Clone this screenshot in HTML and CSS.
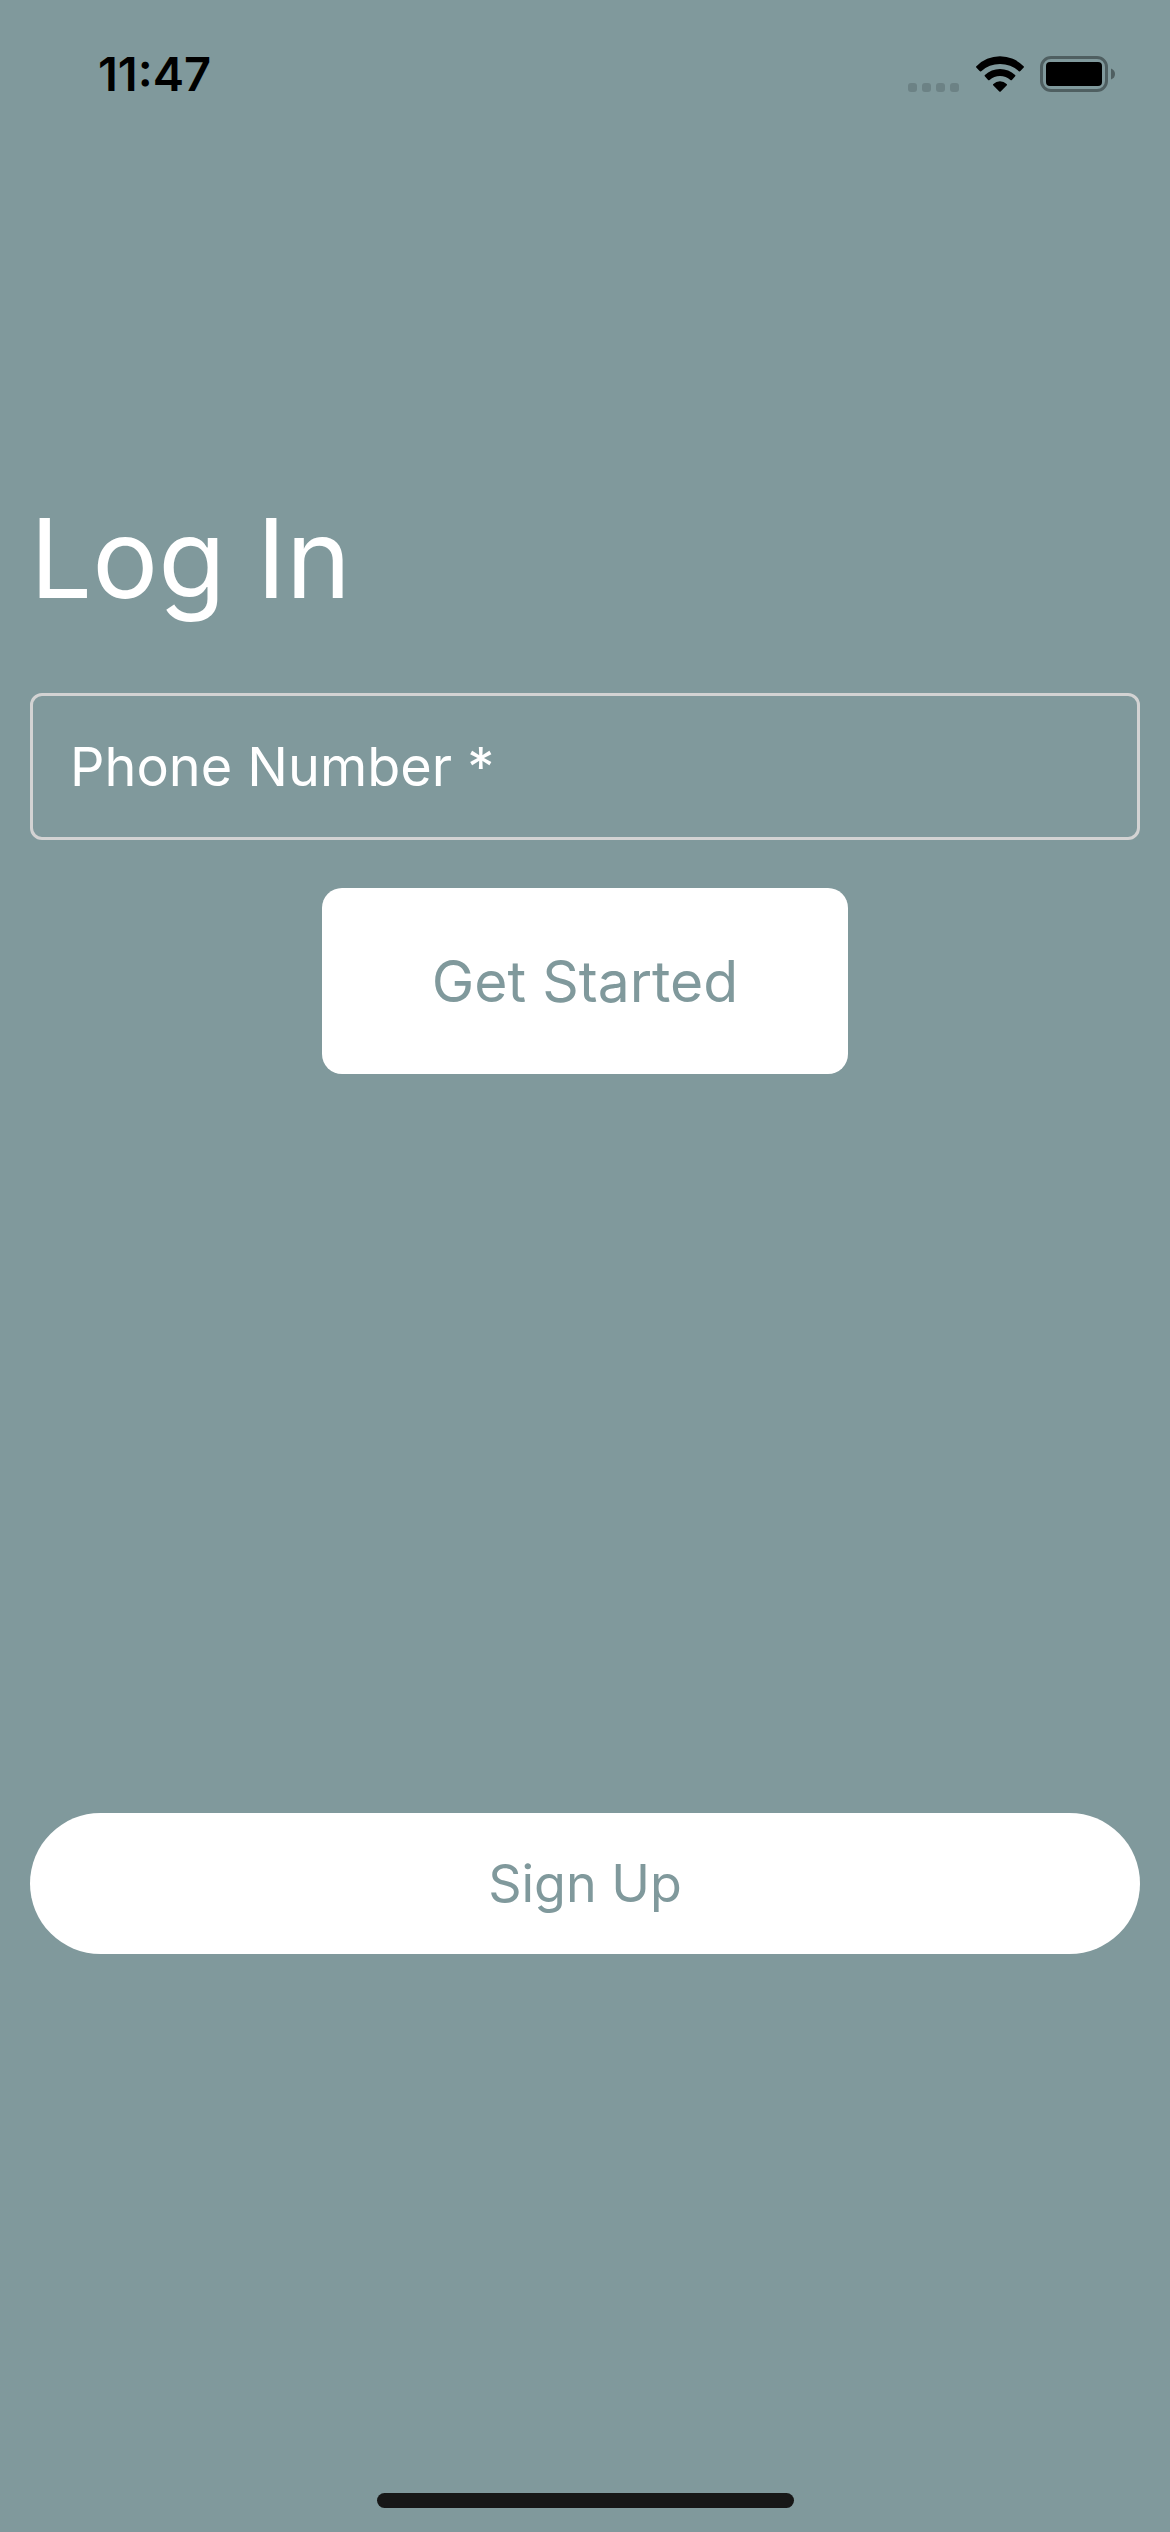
FILE: index.html
```html
<!DOCTYPE html>
<html lang="en">
<head>
  <meta charset="utf-8">
  <meta name="viewport" content="width=device-width, initial-scale=1">
  <title>Log In</title>
  <link rel="stylesheet" href="styles.css">
</head>
<body>
  <div class="screen">
    <header class="status-bar">
      <time class="clock">11:47</time>
      <div class="indicators">
        <svg class="signal" width="52" height="36" viewBox="0 0 52 36" aria-hidden="true">
          <rect x="0" y="27" width="9" height="9" rx="3"/>
          <rect x="14" y="27" width="9" height="9" rx="3"/>
          <rect x="28" y="27" width="9" height="9" rx="3"/>
          <rect x="42" y="27" width="9" height="9" rx="3"/>
        </svg>
        <svg width="48" height="36" viewBox="0 0 48 36" aria-hidden="true">
          <path d="M.4 10.2A33 33 0 0 1 47.6 10.2Q48.3 10.8 47.7 11.5L44.4 15.1Q43.6 15.9 42.8 15.2A27.8 27.8 0 0 0 5.2 15.2Q4.4 15.9 3.6 15.1L.3 11.5Q-.3 10.8 .4 10.2Z"/>
          <path d="M8.9 19A21.7 21.7 0 0 1 39.1 19Q39.8 19.6 39.2 20.3L35.9 23.9Q35.2 24.6 34.4 23.9A15.7 15.7 0 0 0 13.6 23.9Q12.8 24.6 12.1 23.9L8.8 20.3Q8.2 19.6 8.9 19Z"/>
          <path d="M17.4 27.9A9.6 9.6 0 0 1 30.6 27.9Q31.4 28.6 30.6 29.4L24.7 35.5Q24 36.2 23.3 35.5L17.4 29.4Q16.6 28.6 17.4 27.9Z"/>
        </svg>
        <svg width="76" height="36" viewBox="0 0 76 36" aria-hidden="true">
          <rect class="battery-shell" x="1.5" y="1.5" width="65" height="33" rx="9.5"/>
          <rect x="6" y="6" width="56" height="24" rx="4"/>
          <path class="battery-cap" d="M71 12.5Q75 14 75 18T71 23.5Z"/>
        </svg>
      </div>
    </header>

    <main class="content">
      <form class="login">
        <h1 class="title">Log In</h1>
        <input class="field" type="tel" name="phone" placeholder="Phone Number *" aria-label="Phone Number" required>
        <button class="button start" type="submit">Get Started</button>
      </form>
      <button class="button sign-up" type="button">Sign Up</button>
    </main>

    <footer class="home-area">
      <div class="home-bar"></div>
    </footer>
  </div>
</body>
</html>
```
FILE: styles.css
```css
:root {
  --teal: #80999c;
  --line: #d3d3d3;
}

* {
  box-sizing: border-box;
}

body {
  margin: 0;
  background: var(--teal);
  color: #fff;
  font-family: Inter, "Liberation Sans", sans-serif;
}

.screen {
  display: flex;
  flex-direction: column;
  min-height: 100vh;
}

.status-bar {
  display: flex;
  justify-content: space-between;
  align-items: center;
  padding: 44px 54px 0 98px;
  color: #000;
}

.clock {
  font-size: 47px;
  font-weight: 600;
  line-height: 60px;
}

.indicators {
  display: flex;
  gap: 16px;
}

.signal {
  fill: #6c8285;
}

.battery-shell {
  fill: none;
  stroke: #4f5f61;
  stroke-width: 3;
}

.battery-cap {
  fill: #4f5f61;
}

.content {
  display: flex;
  flex-direction: column;
  padding: 384px 30px 0;
}

.login {
  display: flex;
  flex-direction: column;
  align-items: center;
}

.title {
  align-self: flex-start;
  margin: 0 0 65px;
  font-size: 110px;
  font-weight: 400;
  line-height: 140px;
}

.field {
  width: 100%;
  height: 147px;
  margin-bottom: 48px;
  padding: 0 37px;
  border: 3px solid var(--line);
  border-radius: 12px;
  background: transparent;
  color: #fff;
  font: inherit;
  font-size: 54px;
}

.field::placeholder {
  color: #fff;
  opacity: 1;
}

.button {
  border: 0;
  background: #fff;
  color: var(--teal);
  font: inherit;
}

.start {
  height: 186px;
  padding: 0 110px;
  border-radius: 20px;
  font-size: 57px;
}

.sign-up {
  height: 141px;
  margin-top: 739px;
  border-radius: 71px;
  font-size: 52px;
}

.home-area {
  display: flex;
  justify-content: center;
  margin-top: auto;
  padding: 24px 0;
}

.home-bar {
  width: 417px;
  height: 15px;
  border-radius: 8px;
  background: #171717;
}
```
